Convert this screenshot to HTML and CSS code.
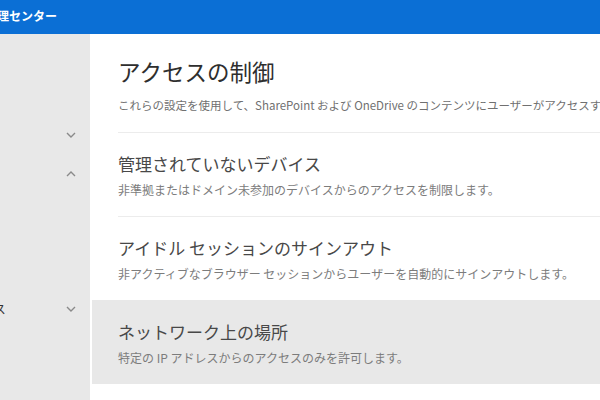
FILE: index.html
```html
<!DOCTYPE html>
<html lang="ja">
<head>
    <meta charset="UTF-8">
    <meta name="viewport" content="width=device-width, initial-scale=1.0">
    <title>アクセスの制御 - SharePoint 管理センター</title>
    <link rel="stylesheet" href="styles.css">
</head>
<body>
    <header class="topbar">
        <div class="app-title">管理センター</div>
    </header>

    <div class="layout">
        <nav class="sidebar">
            <ul class="nav">
                <li class="nav-item"><span class="nav-label">≡</span></li>
                <li class="nav-item"><span class="nav-label">ホーム</span></li>
                <li class="nav-item">
                    <span class="nav-label">サイト</span>
                    <svg class="chevron" viewBox="0 0 10 6"><path d="M1 1l4 4 4-4"/></svg>
                </li>
                <li class="nav-item">
                    <span class="nav-label">ポリシー</span>
                    <svg class="chevron" viewBox="0 0 10 6"><path d="M1 5l4-4 4 4"/></svg>
                </li>
                <li class="nav-item sub"><span class="nav-label">共有</span></li>
                <li class="nav-item sub"><span class="nav-label">アクセスの制御</span></li>
                <li class="nav-item sub"><span class="nav-label">設定</span></li>
                <li class="nav-item sub">
                    <span class="nav-label">コンテンツ サービス</span>
                    <svg class="chevron" viewBox="0 0 10 6"><path d="M1 1l4 4 4-4"/></svg>
                </li>
                <li class="nav-item sub"><span class="nav-label">移行</span></li>
            </ul>
        </nav>

        <main class="content">
            <div class="page-header">
                <h1 class="page-title">アクセスの制御</h1>
                <p class="page-desc">これらの設定を使用して、SharePoint および OneDrive のコンテンツにユーザーがアクセスする方法を制御します。</p>
            </div>

            <ul class="settings">
                <li class="setting">
                    <div class="setting-body">
                        <div class="setting-title">管理されていないデバイス</div>
                        <div class="setting-desc">非準拠またはドメイン未参加のデバイスからのアクセスを制限します。</div>
                    </div>
                </li>
                <li class="setting">
                    <div class="setting-body">
                        <div class="setting-title">アイドル セッションのサインアウト</div>
                        <div class="setting-desc">非アクティブなブラウザー セッションからユーザーを自動的にサインアウトします。</div>
                    </div>
                </li>
                <li class="setting active">
                    <div class="setting-body">
                        <div class="setting-title">ネットワーク上の場所</div>
                        <div class="setting-desc">特定の IP アドレスからのアクセスのみを許可します。</div>
                    </div>
                </li>
                <li class="setting">
                    <div class="setting-body">
                        <div class="setting-title">アプリのアクセス</div>
                        <div class="setting-desc">先進認証を使用しないアプリからのアクセスを制御します。</div>
                    </div>
                </li>
            </ul>
        </main>
    </div>
</body>
</html>
```

FILE: styles.css
```css
* {
    margin: 0;
    padding: 0;
    box-sizing: border-box;
    font-family: 'Noto Sans CJK JP', 'Noto Sans', sans-serif;
}

html, body {
    height: 100%;
    overflow: hidden;
}

body {
    background: #ffffff;
    display: flex;
    flex-direction: column;
}

.topbar {
    height: 34px;
    background: #0b6fd5;
    display: flex;
    align-items: center;
    overflow: hidden;
    flex-shrink: 0;
}

.app-title {
    color: #ffffff;
    font-size: 12px;
    font-weight: bold;
    margin-left: -15px;
    margin-top: -3px;
    white-space: nowrap;
}

.layout {
    flex: 1;
    display: flex;
    min-height: 0;
}

.sidebar {
    width: 90px;
    flex-shrink: 0;
    background: #e8e8e8;
    overflow: hidden;
}

.nav {
    list-style: none;
    width: 200px;
    margin-left: -110px;
    padding-top: 3px;
}

.nav-item {
    height: 39px;
    display: flex;
    align-items: center;
    justify-content: space-between;
    padding: 0 14px 0 5px;
    font-size: 12px;
    color: #333333;
    white-space: nowrap;
}

.nav-item.sub {
    height: 33px;
}

.chevron {
    width: 10px;
    height: 6px;
    fill: none;
    stroke: #8a8a8a;
    stroke-width: 1.4;
}

.content {
    flex: 1;
    min-width: 0;
    overflow: hidden;
}

.page-header {
    padding: 22px 0 19px 28px;
    margin-right: -40px;
}

.page-title {
    font-size: 22.5px;
    font-weight: normal;
    line-height: 30px;
    color: #2e2e2e;
    margin-bottom: 11px;
}

.page-desc {
    font-size: 11.5px;
    line-height: 16px;
    color: #707070;
    white-space: nowrap;
}

.settings {
    list-style: none;
    padding-left: 2px;
}

.setting {
    cursor: pointer;
}

.setting:hover,
.setting.active {
    background: #e8e8e8;
}

.setting-body {
    margin-left: 26px;
    padding: 19px 0 17px;
    border-top: 1px solid #ececec;
}

.setting.active .setting-body,
.setting.active + .setting .setting-body {
    border-top-color: transparent;
}

.setting-title {
    font-size: 17px;
    line-height: 24px;
    color: #484848;
    margin-bottom: 5px;
}

.setting-desc {
    font-size: 12px;
    line-height: 18px;
    color: #7c7c7c;
    white-space: nowrap;
}
```
